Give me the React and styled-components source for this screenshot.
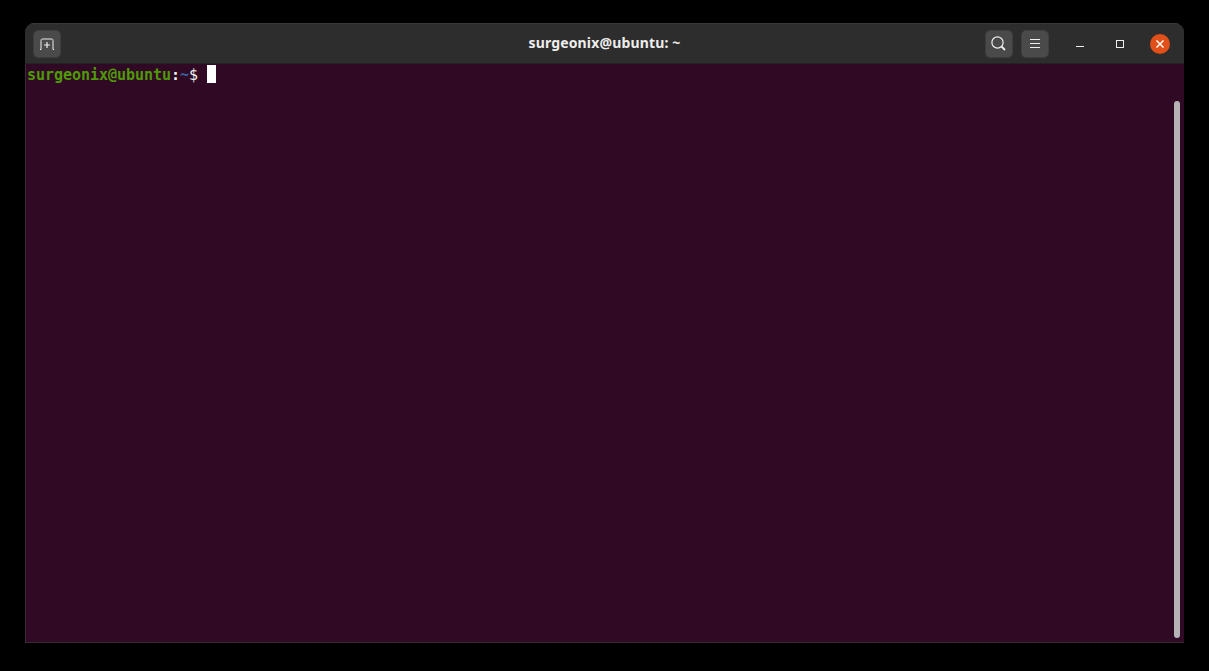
import React from "react";
import styled, {createGlobalStyle} from "styled-components";

const GlobalStyle = createGlobalStyle`
  html, body {
    margin: 0;
    height: 100%;
    background: #000;
  }
  body {
    padding: 23px 25px 28px;
    box-sizing: border-box;
    overflow: hidden;
  }
`;

const Window = styled.div`
  width: 1159px;
  height: 620px;
  display: flex;
  flex-direction: column;
  border-radius: 9px 9px 0 0;
  overflow: hidden;
  background: #300a24;
`;

const TitleBar = styled.header`
  height: 41px;
  flex: none;
  display: grid;
  grid-template-columns: 1fr auto 1fr;
  align-items: center;
  padding: 0 14px 0 8px;
  background: #2d2d2d;
  border-top: 1px solid #3a3a3a;
  border-bottom: 1px solid #262222;
  box-sizing: border-box;
`;

const Side = styled.div`
  display: flex;
  align-items: center;
  justify-content: ${p => (p.$end ? "flex-end" : "flex-start")};
`;

const HeaderButton = styled.button`
  width: 28px;
  height: 28px;
  margin-right: ${p => p.$gap || 0}px;
  padding: 0;
  display: flex;
  align-items: center;
  justify-content: center;
  background: #4a4a4a;
  border: 1px solid #3e3e3e;
  border-radius: 5px;
`;

const Title = styled.h1`
  margin: -2px 0 0 6px;
  color: #eeeeec;
  font: 700 14px "Noto Sans", sans-serif;
  letter-spacing: 0.16px;
`;

const WindowButton = styled.button`
  width: 20px;
  height: 20px;
  margin-left: ${p => p.$gap || 0}px;
  padding: 0;
  display: flex;
  align-items: center;
  justify-content: center;
  background: ${p => (p.$close ? "#e2501a" : "transparent")};
  border: 0;
  border-radius: 50%;
`;

const Terminal = styled.main`
  flex: 1;
  display: flex;
  min-height: 0;
  background: #300a24;
  border-left: 1px solid #3a2a34;
  border-bottom: 1px solid #3a2a34;
`;

const Prompt = styled.div`
  flex: 1;
  display: flex;
  align-items: flex-start;
  height: 18px;
  padding: 2px 0 0 1px;
  font: 700 15px/18px "DejaVu Sans Mono", monospace;
  letter-spacing: -0.03px;
  white-space: pre;
`;

const Segment = styled.span`
  color: ${p => p.$color};
  font-weight: ${p => p.$weight || 700};
`;

const Cursor = styled.span`
  width: 9px;
  height: 18px;
  margin-top: -1px;
  background: #fff;
`;

const Scrollbar = styled.div`
  width: 6px;
  margin: 37px 4px 4px 0;
  background: #b5b3b4;
  border-radius: 3px;
`;

const Icon = styled.svg`
  display: block;
  fill: none;
  stroke: ${p => p.$stroke || "#eeeeec"};
  stroke-width: ${p => p.$width || 1};
`;

export default function App() {
    return (
        <>
            <GlobalStyle/>
            <Window>
                <TitleBar>
                    <Side>
                        <HeaderButton aria-label="New tab">
                            <Icon width="16" height="16" viewBox="0 0 16 16">
                                <path d="M2 13.5V4.5C2 3.5 2.5 3 3.5 3H12.5C13.5 3 14 3.5 14 4.5V13.5"/>
                                <path d="M1 13.5H2M14 13.5h1"/>
                                <path d="M8 6v6M5 9h6" strokeWidth="1.2"/>
                            </Icon>
                        </HeaderButton>
                    </Side>
                    <Title>surgeonix@ubuntu: ~</Title>
                    <Side $end>
                        <HeaderButton aria-label="Search" $gap={8}>
                            <Icon width="16" height="16" viewBox="0 0 16 16" $width={1.2}>
                                <circle cx="6.5" cy="6.5" r="5.6"/>
                                <path d="M10.5 10.5l3.5 3.5" strokeWidth="1.8"/>
                            </Icon>
                        </HeaderButton>
                        <HeaderButton aria-label="Menu">
                            <Icon width="12" height="12" viewBox="0 0 12 12">
                                <path d="M1 1.5h10M1 5.5h10M1 9.5h10"/>
                            </Icon>
                        </HeaderButton>
                        <WindowButton aria-label="Minimize" $gap={21}>
                            <Icon width="10" height="10" viewBox="0 0 10 10">
                                <path d="M1 7.5h8"/>
                            </Icon>
                        </WindowButton>
                        <WindowButton aria-label="Maximize" $gap={20}>
                            <Icon width="10" height="10" viewBox="0 0 10 10">
                                <rect x="1.5" y="1.5" width="7" height="7"/>
                            </Icon>
                        </WindowButton>
                        <WindowButton aria-label="Close" $close $gap={20}>
                            <Icon width="10" height="10" viewBox="0 0 10 10" $stroke="#fff" $width={1.5}>
                                <path d="M1.5 1.5l7 7M8.5 1.5l-7 7"/>
                            </Icon>
                        </WindowButton>
                    </Side>
                </TitleBar>
                <Terminal>
                    <Prompt>
                        <Segment $color="#4e9a06">surgeonix@ubuntu</Segment>
                        <Segment $color="#eeeeec">:</Segment>
                        <Segment $color="#3465a4">~</Segment>
                        <Segment $color="#eeeeec" $weight={400}>$ </Segment>
                        <Cursor/>
                    </Prompt>
                    <Scrollbar/>
                </Terminal>
            </Window>
        </>
    );
}
